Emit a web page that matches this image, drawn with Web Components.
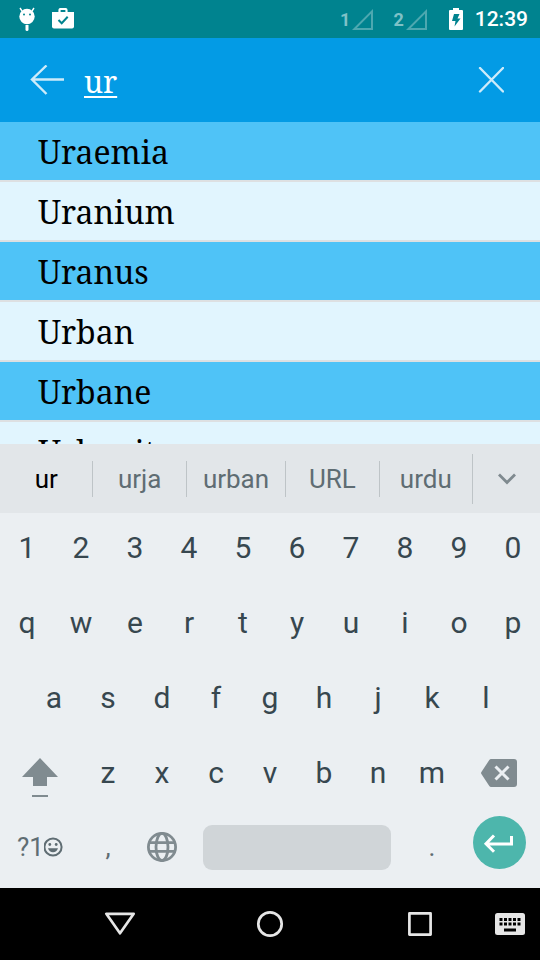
<!DOCTYPE html>
<html lang="en">
<head>
<meta charset="utf-8">
<meta name="viewport" content="width=device-width, initial-scale=1">
<title>Dictionary</title>
<style>
  body {
    margin: 0;
    height: 100vh;
    display: flex;
    flex-direction: column;
    overflow: hidden;
    font-family: Roboto, sans-serif;
  }
</style>
</head>
<body>
  <status-bar time="12:39"></status-bar>
  <search-bar value="ur"></search-bar>
  <word-list>
    <word-row>Uraemia</word-row>
    <word-row>Uranium</word-row>
    <word-row>Uranus</word-row>
    <word-row>Urban</word-row>
    <word-row>Urbane</word-row>
    <word-row>Urbanity</word-row>
  </word-list>
  <suggestion-strip words="ur,urja,urban,URL,urdu"></suggestion-strip>
  <soft-keyboard></soft-keyboard>
  <nav-bar></nav-bar>

<script>
window.customElements.define('status-bar',
class Element extends HTMLElement {

  constructor(){
    super()
    this.attachShadow({mode:'open'})
  }

  connectedCallback(){
    this.shadowRoot.innerHTML = `
    <style>
    :host{
      flex:none;
      display:flex;
      align-items:center;
      justify-content:space-between;
      height:38px;
      padding:0 12px 0 18px;
      background:#00838f;
      color:#fff;
    }
    div{
      display:flex;
      align-items:center;
    }
    svg{
      display:block;
    }
    .left{
      gap:16px;
    }
    .sim{
      gap:2px;
      margin-right:20px;
      font-size:18px;
      font-weight:700;
      color:#7fc1c7;
    }
    .battery{
      margin:0 12px 0 2px;
    }
    time{
      font-size:21px;
      font-weight:500;
    }
    </style>
    <div class="left">
      <svg width="18" height="24" viewBox="0 0 18 24" fill="#fff">
        <path d="M4 4 2 1M14 4 16 1" stroke="#fff" stroke-width="1.4"/>
        <circle cx="9" cy="9.500" r="7.700"/>
        <path d="M7.500 18h3v4.500a1.500 1.500 0 0 1-3 0z"/>
        <circle cx="6" cy="7.500" r="1" fill="#00838f"/>
        <circle cx="12" cy="7.500" r="1" fill="#00838f"/>
      </svg>
      <svg width="22" height="22" viewBox="0 0 22 22">
        <path d="M7.500 6V2.300q0-1.300 1.300-1.300h4.400q1.300 0 1.300 1.300V6" fill="none" stroke="#fff" stroke-width="2.200"/>
        <path d="M0 4h22v14.500a2 2 0 0 1-2 2H2a2 2 0 0 1-2-2z" fill="#fff"/>
        <path d="m6.500 12 3.200 3.200 6-6.500" fill="none" stroke="#00838f" stroke-width="2"/>
      </svg>
    </div>
    <div>
      <div class="sim">1 ${this.signal()}</div>
      <div class="sim">2 ${this.signal()}</div>
      <svg class="battery" width="14" height="22" viewBox="0 0 14 22">
        <path d="M4 0h6v2h3a1 1 0 0 1 1 1v18a1 1 0 0 1-1 1H1a1 1 0 0 1-1-1V3a1 1 0 0 1 1-1h3z" fill="#fff"/>
        <path d="M5 6h5.500L8.500 10.500h3L5.500 18.500l1-5.500H3z" fill="#00838f"/>
      </svg>
      <time>${this.getAttribute('time')}</time>
    </div>
    `
  }

  signal(){
    return `
    <svg width="21" height="21" viewBox="0 0 21 21" fill="none" stroke="#4da8b0" stroke-width="2">
      <path d="M2.400 20H20V2.400z"/>
    </svg>`
  }

})

window.customElements.define('search-bar',
class Element extends HTMLElement {

  constructor(){
    super()
    this.attachShadow({mode:'open'})
  }

  connectedCallback(){
    this.shadowRoot.innerHTML = `
    <style>
    :host{
      flex:none;
      display:flex;
      align-items:center;
      height:84px;
      padding:0 24px 0 22px;
      background:#039be5;
    }
    button{
      display:flex;
      align-items:center;
      justify-content:center;
      width:50px;
      height:48px;
      padding:0;
      border:0;
      background:none;
    }
    input{
      flex:1;
      min-width:0;
      margin-left:12px;
      padding:3px 0 0;
      border:0;
      outline:0;
      background:none;
      color:#fff;
      font:30px/40px "Noto Serif", "DejaVu Serif Condensed", "DejaVu Serif", serif;
      text-decoration:underline;
      text-decoration-thickness:2px;
      text-underline-offset:3px;
    }
    svg{
      fill:none;
      stroke:#cdebfa;
      stroke-width:2.400;
    }
    </style>
    <button aria-label="Back">
      <svg width="34" height="30" viewBox="0 0 34 30"><path d="M34 14.500H2M16.500 .5 2 14.500l14.500 14.500"/></svg>
    </button>
    <input type="text" aria-label="Search" spellcheck="false" value="${this.getAttribute('value')}">
    <button class="clear" aria-label="Clear">
      <svg width="26" height="26" viewBox="0 0 26 26" stroke-linecap="round"><path d="m2 1 23 23.500m0-23.500-23 23.500"/></svg>
    </button>
    `
    let input = this.shadowRoot.querySelector('input')
    this.shadowRoot.querySelector('.clear').addEventListener('click',()=>{
      input.value = ""
      input.focus()
    })
  }

})

window.customElements.define('word-list',
class Element extends HTMLElement {

  constructor(){
    super()
    this.attachShadow({mode:'open'})
    this.shadowRoot.innerHTML = `
    <style>
    :host{
      flex:1;
      min-height:0;
      display:block;
      overflow:hidden;
      background:#e1f5fe;
    }
    ::slotted(word-row:nth-child(odd)){
      background:#4fc3f7;
    }
    </style>
    <div role="list"><slot></slot></div>
    `
  }

})

window.customElements.define('word-row',
class Element extends HTMLElement {

  constructor(){
    super()
    this.attachShadow({mode:'open'})
    this.shadowRoot.innerHTML = `
    <style>
    :host{
      display:block;
      box-sizing:border-box;
      height:60px;
      padding:3px 38px 0;
      border-bottom:2px solid #dde0e2;
      background:#e1f5fe;
      color:#000;
      font:32px/54px "Noto Serif", "DejaVu Serif Condensed", "DejaVu Serif", serif;
    }
    </style>
    <slot></slot>
    `
  }

  connectedCallback(){
    this.setAttribute('role', 'listitem')
  }

})

window.customElements.define('suggestion-strip',
class Element extends HTMLElement {

  constructor(){
    super()
    this.attachShadow({mode:'open'})
  }

  connectedCallback(){
    let words = this.getAttribute('words').split(',')
    this.shadowRoot.innerHTML = `
    <style>
    :host{
      flex:none;
      display:flex;
      align-items:center;
      height:69px;
      background:#e2e6e9;
    }
    button{
      flex:1;
      box-sizing:border-box;
      height:36px;
      padding:0 16px;
      border:0;
      border-right:1px solid #bec4c7;
      background:none;
      color:#5f6d73;
      font:26px/36px Roboto, sans-serif;
    }
    button:first-of-type{
      color:#000;
    }
    button:nth-last-of-type(2){
      border-right:0;
    }
    .more{
      flex:none;
      display:flex;
      align-items:center;
      justify-content:center;
      width:68px;
      height:50px;
      border-right:0;
      border-left:1px solid #bec4c7;
    }
    </style>
    ${words.map(word => `<button>${word}</button>`).join('')}
    <button class="more" aria-label="More suggestions">
      <svg width="18" height="12" viewBox="0 0 18 12" fill="none" stroke="#7f8a8f" stroke-width="2.800"><path d="m1 1.500 8 8 8-8"/></svg>
    </button>
    `
  }

})

window.customElements.define('soft-key',
class Element extends HTMLElement {

  constructor(){
    super()
    this.attachShadow({mode:'open'})
  }

  connectedCallback(){
    let label = this.getAttribute('label')
    this.shadowRoot.innerHTML = `
    <style>
    :host{
      flex:1 1 0;
      min-width:0;
      display:flex;
    }
    :host([size="wide"]){
      flex-grow:1.500;
    }
    :host([size="space"]){
      flex-grow:4;
    }
    button{
      flex:1;
      min-width:0;
      display:flex;
      align-items:center;
      justify-content:center;
      padding:0 0 5px;
      border:0;
      background:none;
      color:#37474f;
      font:30px/36px Roboto, sans-serif;
    }
    :host([kind="minor"]) button{
      padding-bottom:7px;
      color:#5f6d73;
      font-size:26px;
    }
    :host([kind="enter"]) button{
      padding-bottom:16px;
    }
    </style>
    <button ${label ? `aria-label="${label}"` : ''}><slot></slot></button>
    `
  }

})

window.customElements.define('soft-keyboard',
class Element extends HTMLElement {

  css(){
    return `
    :host{
      flex:none;
      display:block;
      background:#ebeff2;
    }
    .row{
      display:flex;
      height:75px;
    }
    .row.home{
      padding:0 5%;
    }
    svg{
      display:block;
    }
    .bar{
      display:block;
      flex:1;
      height:45px;
      margin:0 14px;
      border-radius:9px;
      background:#d0d5d8;
    }
    `
  }

  keys(letters){
    return letters.split('').map(k => `<soft-key>${k}</soft-key>`).join('')
  }

  html(){
    return `
    <style>
    ${this.css()}
    </style>
    <div class="row">${this.keys('1234567890')}</div>
    <div class="row">${this.keys('qwertyuiop')}</div>
    <div class="row home">${this.keys('asdfghjkl')}</div>
    <div class="row">
      <soft-key size="wide" label="Shift">
        <svg width="38" height="50" viewBox="0 0 38 50" fill="#808b90">
          <path d="m18 10 18 19H25v9H11v-9H0z"/>
          <path d="M10 47h16v2H10z"/>
        </svg>
      </soft-key>
      ${this.keys('zxcvbnm')}
      <soft-key size="wide" label="Delete">
        <svg width="38" height="28" viewBox="0 0 38 28">
          <path d="M10 0h23a3 3 0 0 1 3 3v22a3 3 0 0 1-3 3H10q-1 0-1.700-1L.4 15q-.7-1 0-2L8.300 1Q9 0 10 0z" fill="#808b90"/>
          <path d="m14.500 7.500 13 13m0-13-13 13" stroke="#ebeff2" stroke-width="3"/>
        </svg>
      </soft-key>
    </div>
    <div class="row">
      <soft-key size="wide" kind="minor">?1<svg width="20" height="20" viewBox="0 0 20 20">
          <circle cx="9" cy="10" r="8.600" fill="none" stroke="#5f6d73" stroke-width="2"/>
          <circle cx="5.800" cy="7.500" r="1.400" fill="#5f6d73"/>
          <circle cx="12.200" cy="7.500" r="1.400" fill="#5f6d73"/>
          <path d="M4 11.200h10q-1.300 4-5 4t-5-4z" fill="#5f6d73"/>
        </svg></soft-key>
      <soft-key kind="minor">,</soft-key>
      <soft-key kind="minor" label="Language">
        <svg width="30" height="30" viewBox="0 0 30 30" fill="none" stroke="#808b90" stroke-width="2.800">
          <circle cx="15" cy="15" r="13.600"/>
          <ellipse cx="15" cy="15" rx="6" ry="13.600"/>
          <path d="M2.500 10.700h25M2.500 19.300h25"/>
        </svg>
      </soft-key>
      <soft-key size="space" kind="minor" label="Space"><span class="bar"></span></soft-key>
      <soft-key kind="minor">.</soft-key>
      <soft-key size="wide" kind="enter" label="Enter">
        <svg width="53" height="53" viewBox="0 0 53 53">
          <circle cx="26.500" cy="26.500" r="26.500" fill="#4db6ac"/>
          <path d="M38.500 20v8H13.500M21 19.500 13 27.800l8 8" fill="none" stroke="#fff" stroke-width="3"/>
        </svg>
      </soft-key>
    </div>
    `
  }

  constructor(){
    super()
    this.attachShadow({mode:'open'})
    this.shadowRoot.innerHTML = this.html()
  }

})

window.customElements.define('nav-bar',
class Element extends HTMLElement {

  constructor(){
    super()
    this.attachShadow({mode:'open'})
    let dots = [0, 1, 2, 3, 4].map(i =>
      `<path d="M${4.500 + i * 4.500} 5h3v3h-3zM${4.500 + i * 4.500} 9.500h3v3h-3z"/>`
    ).join('')
    this.shadowRoot.innerHTML = `
    <style>
    :host{
      flex:none;
      display:grid;
      grid-template-columns:2fr 3fr 2fr 1fr;
      height:72px;
      padding-left:11.111%;
      background:#000;
    }
    button{
      display:flex;
      align-items:center;
      justify-content:center;
      padding:0;
      border:0;
      background:none;
    }
    .line{
      fill:none;
      stroke:#e6e6e6;
      stroke-width:2.700;
      stroke-linejoin:round;
    }
    </style>
    <button aria-label="Back">
      <svg class="line" width="32" height="26" viewBox="0 0 32 26"><path d="M2.300 2.800h27.400L16 22.300z"/></svg>
    </button>
    <button aria-label="Home">
      <svg class="line" width="28" height="28" viewBox="0 0 28 28"><circle cx="14" cy="14" r="11.700"/></svg>
    </button>
    <button aria-label="Overview">
      <svg class="line" width="26" height="26" viewBox="0 0 26 26"><path d="M2.400 2.400h21.200v21.200H2.400z"/></svg>
    </button>
    <button aria-label="Switch keyboard">
      <svg width="30" height="22" viewBox="0 0 30 22">
        <rect width="30" height="22" rx="2.500" fill="#e6e6e6"/>
        ${dots}
        <path d="M9 15.500h12v3H9z"/>
      </svg>
    </button>
    `
  }

})
</script>
</body>
</html>
